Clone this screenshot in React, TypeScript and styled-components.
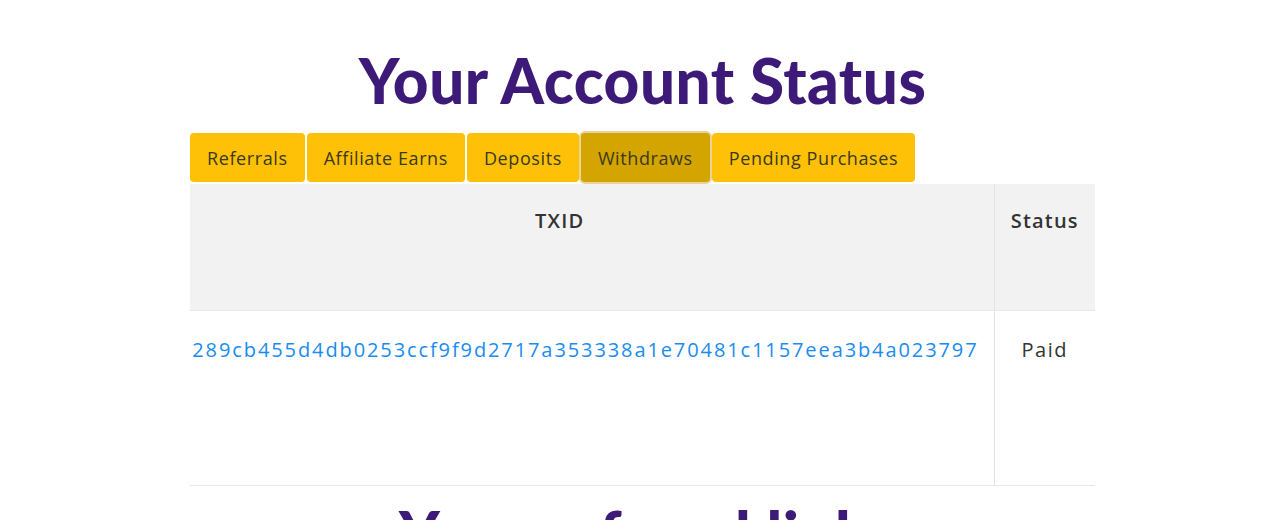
import React from 'react';
import styled, { createGlobalStyle } from 'styled-components';

const GlobalStyle = createGlobalStyle`
  body {
    margin: 0;
    background: #fff;
    font-family: "Open Sans", "Liberation Sans", sans-serif;
    overflow: hidden;
  }
`

const tabs = ['Referrals', 'Affiliate Earns', 'Deposits', 'Withdraws', 'Pending Purchases']

const withdraws = [
  { txid: 'e1c7289cb455d4db0253ccf9f9d2717a353338a1e70481c1157eea3b4a023797', status: 'Paid' }
]

const App = () => {
  const active = 'Withdraws'

  return (
    <Page>
      <GlobalStyle />
      <Title>Your Account Status</Title>
      <TabBar>
        {tabs.map(t => (
          <Tab key={t} $active={t === active}>{t}</Tab>
        ))}
      </TabBar>
      <TableWrap>
        <Table>
          <thead>
            <tr>
              <Th>TXID</Th>
              <Th $narrow>Status</Th>
            </tr>
          </thead>
          <tbody>
            {withdraws.map(w => (
              <tr key={w.txid}>
                <Td><TxLink href="#">{w.txid}</TxLink></Td>
                <Td $narrow>{w.status}</Td>
              </tr>
            ))}
          </tbody>
        </Table>
      </TableWrap>
      <SubTitle>Your referral link:</SubTitle>
    </Page>
  )
}

export default App

const Page = styled.div`
  margin: 0 185px 0 190px;
`

const Title = styled.h1`
  margin: 43px 0 16px;
  font-family: Lato, "Open Sans", sans-serif;
  font-weight: 900;
  font-size: 62px;
  line-height: 1.2;
  text-align: center;
  color: #3d1a78;
  letter-spacing: 0.5px;
`

const SubTitle = styled(Title)`
  margin: 10px 0 0;
`

const TabBar = styled.div`
  display: flex;
  gap: 2px;
  margin-bottom: 2px;
`

const Tab = styled.button<{ $active?: boolean }>`
  height: 49px;
  padding: 0 17px;
  border: none;
  border-radius: 4px;
  font-family: "Open Sans", sans-serif;
  font-size: 18px;
  letter-spacing: 0.6px;
  color: #3a3a1a;
  background: ${props => props.$active ? '#d4a400' : '#ffc107'};
  box-shadow: ${props => props.$active ? '0 0 0 2px rgba(200, 160, 30, 0.45)' : 'none'};
  cursor: pointer;
`

const TableWrap = styled.div`
  overflow: hidden;
  border-bottom: 1px solid #e6e6e6;
`

const Table = styled.table`
  margin-left: -64px;
  width: calc(100% + 64px);
  border-collapse: collapse;
`

const Th = styled.th<{ $narrow?: boolean }>`
  height: 126px;
  box-sizing: border-box;
  padding: 22px 0 0;
  vertical-align: top;
  background: #f2f2f2;
  font-size: 20px;
  font-weight: 600;
  letter-spacing: 1.2px;
  line-height: 1.5;
  color: #333;
  text-align: center;
  width: ${props => props.$narrow ? '101px' : 'auto'};
  border-left: ${props => props.$narrow ? '1px solid #e3e3e3' : 'none'};
  border-bottom: 1px solid #e8e8e8;
`

const Td = styled.td<{ $narrow?: boolean }>`
  height: 175px;
  box-sizing: border-box;
  padding: 24px 0 0;
  vertical-align: top;
  font-size: 20px;
  letter-spacing: 1.5px;
  line-height: 1.5;
  color: #333;
  text-align: center;
  width: ${props => props.$narrow ? '101px' : 'auto'};
  border-left: ${props => props.$narrow ? '1px solid #e3e3e3' : 'none'};
  white-space: nowrap;
`

const TxLink = styled.a`
  color: #1a8cf0;
  text-decoration: none;
  letter-spacing: 1.9px;
`
